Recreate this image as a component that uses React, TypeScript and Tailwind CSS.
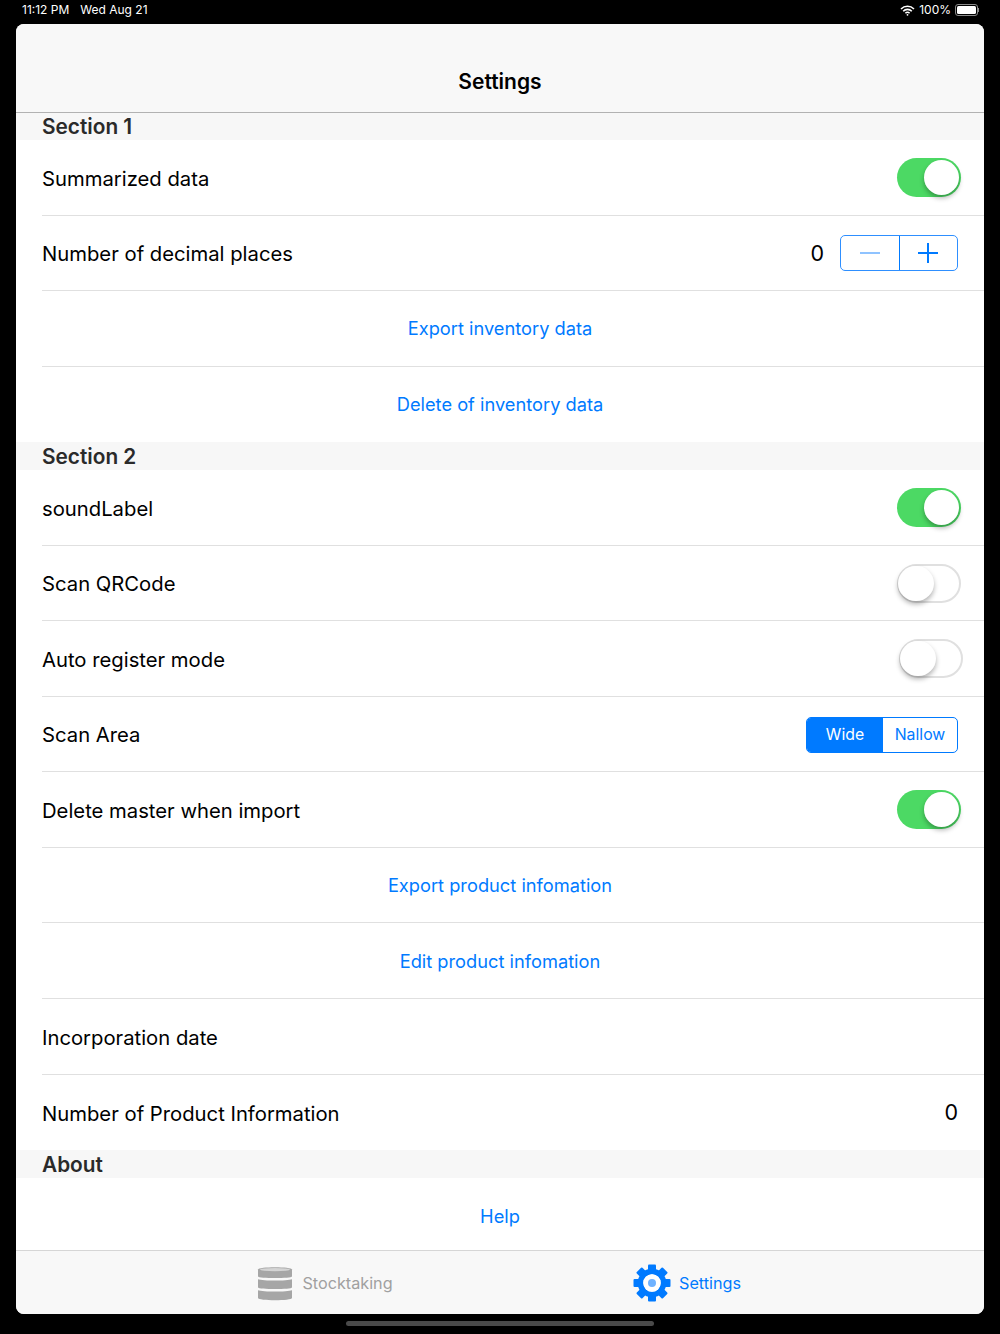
function Toggle({ on, className = '' }: { on: boolean; className?: string }) {
  return (
    <div
      className={`relative h-[39px] w-[64px] rounded-full ${
        on ? 'bg-[#4cd964]' : 'border-2 border-[#e0e0e0] bg-white'
      } ${className}`}
    >
      <div
        className={`absolute rounded-full bg-white shadow-[0_3px_5px_rgba(0,0,0,0.3)] ${
          on ? 'left-[27px] top-[2px] h-[35px] w-[35px]' : 'left-[-1px] top-0 h-[35px] w-[36px]'
        }`}
      />
    </div>
  );
}

function Row({ label, children, last }: { label: string; children?: React.ReactNode; last?: boolean }) {
  return (
    <div className="h-[75.55px] pl-[26px]">
      <div className={`flex h-full items-center justify-between ${last ? '' : 'border-b border-[#e0e0e0]'}`}>
        <span className="pt-[3px] text-[20.25px] text-black">{label}</span>
        {children}
      </div>
    </div>
  );
}

function LinkRow({ label, last }: { label: string; last?: boolean }) {
  return (
    <div className="h-[75.55px] pl-[26px]">
      <div className={`flex h-full items-center justify-center pr-[26px] ${last ? '' : 'border-b border-[#e0e0e0]'}`}>
        <span className="pt-[1px] text-[18.25px] text-[#007aff]">{label}</span>
      </div>
    </div>
  );
}

function SectionHeader({ title, first }: { title: string; first?: boolean }) {
  return (
    <div
      className={`flex items-center bg-[#f7f7f7] pl-[26px] pt-[2px] text-[20.8px] font-semibold leading-none text-[#2a2a2a] ${
        first ? 'h-[27px]' : 'h-[28px]'
      }`}
    >
      {title}
    </div>
  );
}

function StatusBar() {
  return (
    <div className="flex h-[24px] items-center justify-between pl-[22px] pr-[21px] text-[12px] text-white">
      <div className="flex gap-[11px] pb-[4px]">
        <span>11:12 PM</span>
        <span>Wed Aug 21</span>
      </div>
      <div className="flex items-center gap-[4px] pb-[4px]">
        <svg width="15" height="11" viewBox="0 0 15 11" fill="none" stroke="white">
          <path d="M1 4a9.2 9.2 0 0 1 13 0" strokeWidth="1.6" />
          <path d="M3.2 6.2a6 6 0 0 1 8.6 0" strokeWidth="1.6" />
          <path d="M5.4 8.3a3 3 0 0 1 4.2 0" strokeWidth="1.6" />
          <circle cx="7.5" cy="9.8" r="0.9" fill="white" stroke="none" />
        </svg>
        <span>100%</span>
        <div className="flex items-center">
          <div className="h-[12px] w-[23px] rounded-[3px] border border-[#8a8a8a] p-[1px]">
            <div className="h-full w-full rounded-[1.5px] bg-white" />
          </div>
          <div className="h-[4px] w-[1px] bg-[#8a8a8a]" />
        </div>
      </div>
    </div>
  );
}

function Stepper() {
  return (
    <div className="mr-[26px] flex h-[36px] w-[118px] rounded-[5px] border-[1.5px] border-[#2e8fff]">
      <div className="flex flex-1 items-center justify-center border-r border-[#007aff]">
        <div className="h-[2px] w-[20px] bg-[#8fc3ff]" />
      </div>
      <div className="relative flex flex-1 items-center justify-center">
        <div className="h-[2px] w-[20px] bg-[#007aff]" />
        <div className="absolute h-[20px] w-[2px] bg-[#007aff]" />
      </div>
    </div>
  );
}

function Segmented() {
  return (
    <div className="mr-[26px] mt-[1px] flex h-[36px] w-[152px] overflow-hidden rounded-[5px] border-[1.5px] border-[#007aff] text-[15.8px]">
      <div className="flex w-[76px] items-center justify-center bg-[#007aff] pt-[1px] text-white">Wide</div>
      <div className="flex flex-1 items-center justify-center pt-[1px] text-[#007aff]">Nallow</div>
    </div>
  );
}

function DatabaseIcon() {
  return (
    <svg width="36" height="36" viewBox="0 0 36 36" fill="#a6a6a6">
      <path d="M1 4.5C1 1.5 35 1.5 35 4.5V11.5C35 13.5 1 13.5 1 11.5Z" />
      <ellipse cx="18" cy="4.6" rx="15" ry="1.7" fill="#d4d4d4" />
      <path d="M1 14.2C6 16 30 16 35 14.2V22.5C35 24.5 1 24.5 1 22.5Z" />
      <path d="M1 25.2C6 27 30 27 35 25.2V33C35 36 1 36 1 33Z" />
    </svg>
  );
}

function GearIcon() {
  const teeth = [0, 45, 90, 135, 180, 225, 270, 315];
  return (
    <svg width="38" height="38" viewBox="0 0 38 38">
      {teeth.map((deg) => (
        <rect key={deg} x="15" y="0.5" width="8" height="8" rx="1" fill="#007aff" transform={`rotate(${deg} 19 19)`} />
      ))}
      <circle cx="19" cy="19" r="11.5" fill="none" stroke="#007aff" strokeWidth="5.6" />
      <circle cx="19" cy="19" r="8.7" fill="white" />
      <circle cx="19" cy="19" r="4" fill="#6fb2ff" />
    </svg>
  );
}

function TabBar() {
  return (
    <div className="flex h-[64px] items-center justify-center border-t border-[#d6d6d6] bg-[#f8f8f8] pl-[12px] text-[16.2px]">
      <div className="flex w-[362px] items-center justify-center gap-[9px] text-[#a0a0a0]">
        <DatabaseIcon />
        <span className="pt-[2px]">Stocktaking</span>
      </div>
      <div className="flex w-[362px] items-center justify-center gap-[8px] text-[#007aff]">
        <GearIcon />
        <span className="pt-[2px]">Settings</span>
      </div>
    </div>
  );
}

export default function App() {
  return (
    <div className="h-[1334px] w-[1000px] overflow-hidden bg-black font-['Inter','Liberation_Sans',sans-serif]">
      <StatusBar />
      <div className="mx-[16px] w-[968px] overflow-hidden rounded-[8px] bg-white">
        <div className="flex h-[89px] items-center justify-center border-b border-[#b2b2b2] bg-[#f8f8f8] pt-[27px] text-[21px] font-semibold text-black">
          Settings
        </div>
        <SectionHeader title="Section 1" first />
        <Row label="Summarized data">
          <Toggle on className="mr-[23px]" />
        </Row>
        <Row label="Number of decimal places">
          <div className="flex items-center gap-[16px]">
            <span className="text-[21.5px] text-black">0</span>
            <Stepper />
          </div>
        </Row>
        <LinkRow label="Export inventory data" />
        <LinkRow label="Delete of inventory data" last />
        <SectionHeader title="Section 2" />
        <Row label="soundLabel">
          <Toggle on className="mr-[23px]" />
        </Row>
        <Row label="Scan QRCode">
          <Toggle on={false} className="mr-[23px]" />
        </Row>
        <Row label="Auto register mode">
          <Toggle on={false} className="mr-[21px]" />
        </Row>
        <Row label="Scan Area">
          <Segmented />
        </Row>
        <Row label="Delete master when import">
          <Toggle on className="mr-[23px]" />
        </Row>
        <LinkRow label="Export product infomation" />
        <LinkRow label="Edit product infomation" />
        <Row label="Incorporation date" />
        <Row label="Number of Product Information" last>
          <span className="mr-[26px] text-[21.5px] text-black">0</span>
        </Row>
        <SectionHeader title="About" />
        <div className="flex h-[72px] items-center justify-center pt-[5px]">
          <span className="text-[18.25px] text-[#007aff]">Help</span>
        </div>
        <TabBar />
      </div>
      <div className="mx-auto mt-[7px] h-[5px] w-[308px] rounded-full bg-[#4a4a4a]" />
    </div>
  );
}
